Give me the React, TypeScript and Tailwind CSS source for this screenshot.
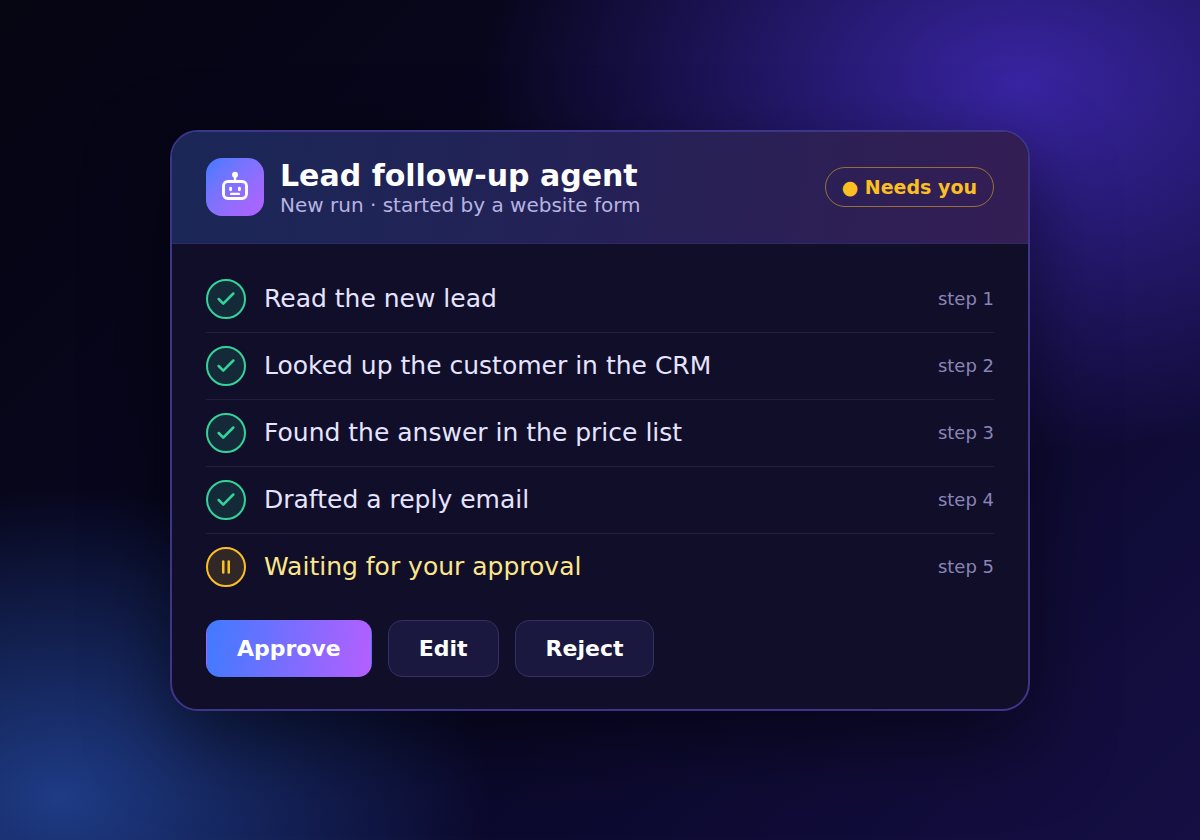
import { Check } from "lucide-react";

type Step = { label: string; status: "done" | "waiting" };

const steps: Step[] = [
    { label: "Read the new lead", status: "done" },
    { label: "Looked up the customer in the CRM", status: "done" },
    { label: "Found the answer in the price list", status: "done" },
    { label: "Drafted a reply email", status: "done" },
    { label: "Waiting for your approval", status: "waiting" },
];

function RobotIcon() {
    return (
        <svg width="34" height="34" viewBox="0 0 34 34" fill="none" stroke="white" strokeWidth="2.9" strokeLinecap="round" aria-hidden="true">
            <rect x="5.5" y="11.5" width="23" height="17" rx="4.4" />
            <path d="M17 11V6" strokeWidth="2.4" />
            <circle cx="17" cy="4.8" r="3" fill="white" stroke="none" />
            <path d="M12.6 18.2v1.6M21.4 18.2v1.6" />
            <path d="M13.2 23.9h7.6" strokeWidth="2.4" />
        </svg>
    );
}

function StatusIcon({ status }: { status: Step["status"] }) {
    if (status === "waiting") {
        return (
            <span className="flex size-10 shrink-0 items-center justify-center rounded-full border-2 border-[#fbbf24] bg-[#fbbf24]/15 text-[#fbbf24]">
                <svg width="22" height="22" viewBox="0 0 24 24" stroke="currentColor" strokeWidth="2.8" strokeLinecap="round" aria-hidden="true">
                    <path d="M9 6v12M15 6v12" />
                </svg>
            </span>
        );
    }
    return (
        <span className="flex size-10 shrink-0 items-center justify-center rounded-full border-2 border-[#34d399] bg-[#34d399]/15 text-[#34d399]">
            <Check size={22} strokeWidth={2.8} />
        </span>
    );
}

export default function App() {
    return (
        <main className="flex min-h-screen items-center justify-center bg-[radial-gradient(540px_370px_at_85%_10%,rgba(79,50,220,0.68),transparent),radial-gradient(430px_310px_at_5%_95%,rgba(52,110,230,0.51),transparent),linear-gradient(135deg,#060512,#080724_50%,#150f44)] font-['DejaVu_Sans',sans-serif]">
            <section className="w-full max-w-[860px] overflow-hidden rounded-[28px] border-2 border-[#3d3688] bg-[#100e28] shadow-[0_30px_80px_rgba(0,0,0,0.5)]">
                <header className="flex items-center gap-4 border-b border-[#2b2c63] bg-linear-[100deg] from-[#1a2757] via-[#242156] to-[#341e54] px-[34px] py-[26px]">
                    <div className="flex size-[58px] shrink-0 items-center justify-center rounded-2xl bg-linear-135 from-[#3f7bff] to-[#b55fff]">
                        <RobotIcon />
                    </div>
                    <div className="flex-1">
                        <h1 className="text-[30px] leading-[35px] font-bold text-white">Lead follow-up agent</h1>
                        <p className="text-[20px] leading-[24px] text-[#b7b3e0]">New run · started by a website form</p>
                    </div>
                    <span className="rounded-full border border-[#fbbf24]/50 px-4 py-2 text-[19px] leading-[22px] font-bold text-[#fbbf24]">● Needs you</span>
                </header>
                <div className="px-[34px] pt-[22px] pb-8">
                    <ol className="divide-y divide-[#231f42]">
                        {steps.map((step, idx) => (
                            <li key={step.label} className="flex items-center gap-[18px] py-[13px]">
                                <StatusIcon status={step.status} />
                                <span className={step.status === "waiting" ? "flex-1 text-[25px] leading-[29px] text-[#fde68a]" : "flex-1 text-[25px] leading-[29px] text-[#e6e4ff]"}>
                                    {step.label}
                                </span>
                                <span className="text-[18px] leading-[21px] text-[#8985b8]">step {idx + 1}</span>
                            </li>
                        ))}
                    </ol>
                    <div className="mt-5 flex gap-4 text-[22px] leading-[25px] font-bold text-white">
                        <button type="button" className="rounded-[14px] border border-transparent bg-linear-[100deg] from-[#3f7bff] to-[#b55fff] px-[30px] py-[15px]">Approve</button>
                        <button type="button" className="rounded-[14px] border border-[#352f66] bg-[#1b183f] px-[30px] py-[15px]">Edit</button>
                        <button type="button" className="rounded-[14px] border border-[#352f66] bg-[#1b183f] px-[30px] py-[15px]">Reject</button>
                    </div>
                </div>
            </section>
        </main>
    );
}
